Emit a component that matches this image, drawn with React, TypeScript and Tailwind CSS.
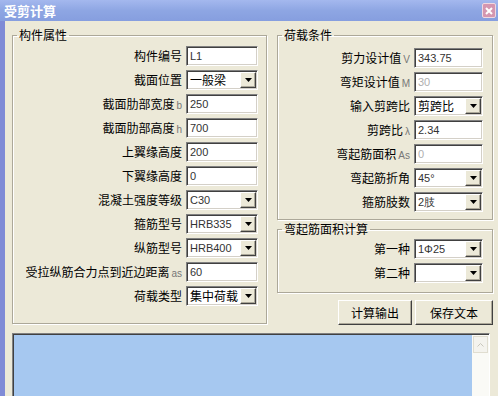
import React from "react";

const cjk = "font-['SimSun','Noto_Sans_CJK_SC',sans-serif]";
const latin = "font-['Tahoma','Liberation_Sans',sans-serif]";

function Label({ text, sub }: { text: string; sub?: string }) {
  return (
    <span className={`${cjk} text-[12px] leading-none text-black whitespace-nowrap`}>
      {text}
      {sub && <span className={`${latin} ml-[2px] text-[10px] text-[#777]`}>{sub}</span>}
    </span>
  );
}

function Arrow() {
  return (
    <div className="flex h-full w-[16px] shrink-0 items-center justify-center border border-t-white border-l-white border-b-[#404040] border-r-[#404040] bg-[#ece9d8] shadow-[inset_-1px_-1px_0_#aca899]">
      <svg width="7" height="4" viewBox="0 0 7 4">
        <path d="M0 0h7L3.5 4z" fill="#000" />
      </svg>
    </div>
  );
}

function Field({
  value,
  select,
  disabled,
  cjkValue,
  w = "w-[72px]",
}: {
  value: string;
  select?: boolean;
  disabled?: boolean;
  cjkValue?: boolean;
  w?: string;
}) {
  return (
    <div
      className={`${w} flex h-[20px] shrink-0 items-stretch border border-t-[#808080] border-l-[#808080] border-b-white border-r-white bg-white shadow-[inset_1px_1px_0_#404040,inset_-1px_-1px_0_#d4d0c8] p-[1px]`}
    >
      <div
        className={`flex min-w-0 flex-1 items-center overflow-hidden whitespace-nowrap pl-[2px] ${
          cjkValue ? `${cjk} text-[12px] text-black` : `${latin} text-[11px] ${disabled ? "text-[#b0b0b0]" : "text-[#333]"}`
        }`}
      >
        {value}
      </div>
      {select && <Arrow />}
    </div>
  );
}

function Row({ children }: { children: React.ReactNode }) {
  return <div className="flex h-[24px] items-center justify-end gap-[4px]">{children}</div>;
}

function Group({ title, className, children }: { title: string; className: string; children: React.ReactNode }) {
  return (
    <fieldset
      className={`border border-[#aca899] shadow-[inset_1px_1px_0_#fff,1px_1px_0_#fff] ${className}`}
    >
      <legend className={`${cjk} ml-[4px] px-[2px] text-[12px] leading-[16px] text-black`}>{title}</legend>
      {children}
    </fieldset>
  );
}

function Button({ text, w }: { text: string; w: string }) {
  return (
    <div
      className={`${w} ${cjk} flex h-[25px] items-center justify-center border border-t-white border-l-white border-b-[#404040] border-r-[#404040] bg-[#ece9d8] text-[12px] text-black shadow-[inset_-1px_-1px_0_#aca899]`}
    >
      {text}
    </div>
  );
}

export default function App() {
  return (
    <div className="flex h-[396px] w-[498px] flex-col overflow-hidden bg-[#ece9d8]">
      {/* 标题栏 */}
      <div className="flex h-[21px] shrink-0 items-center justify-between bg-gradient-to-b from-[#a4b8ee] via-[#8ea6e3] to-[#869edf] pl-[4px] pr-[2px]">
        <span className={`${cjk} text-[13px] font-bold text-white`}>受剪计算</span>
        <div className="flex h-[15px] w-[14px] items-center justify-center rounded-[2px] border border-[#f0d8e0] bg-[#d496b0]">
          <svg width="8" height="8" viewBox="0 0 8 8">
            <path d="M1 1l6 6M7 1L1 7" stroke="#fff" strokeWidth="2" />
          </svg>
        </div>
      </div>

      <div className="flex flex-1">
        <div className="w-[5px] shrink-0 bg-[#7f8bd6]" />
        <div className="flex flex-1 flex-col pl-[7px]">
          <div className="mt-[6px] flex gap-[10px]">
            {/* 左侧 */}
            <Group title="构件属性" className="h-[297px] w-[255px] pr-[8px] pt-[1px]">
              <Row><Label text="构件编号" /><Field value="L1" /></Row>
              <Row><Label text="截面位置" /><Field value="一般梁" select cjkValue /></Row>
              <Row><Label text="截面肋部宽度" sub="b" /><Field value="250" /></Row>
              <Row><Label text="截面肋部高度" sub="h" /><Field value="700" /></Row>
              <Row><Label text="上翼缘高度" /><Field value="200" /></Row>
              <Row><Label text="下翼缘高度" /><Field value="0" /></Row>
              <Row><Label text="混凝土强度等级" /><Field value="C30" select /></Row>
              <Row><Label text="箍筋型号" /><Field value="HRB335" select /></Row>
              <Row><Label text="纵筋型号" /><Field value="HRB400" select /></Row>
              <Row><Label text="受拉纵筋合力点到近边距离" sub="as" /><Field value="60" /></Row>
              <Row><Label text="荷载类型" /><Field value="集中荷载" select cjkValue /></Row>
            </Group>

            {/* 右侧 */}
            <div className="flex w-[216px] flex-col">
              <Group title="荷载条件" className="h-[193px] pr-[9px] pt-[3px]">
                <Row><Label text="剪力设计值" sub="V" /><Field value="343.75" w="w-[69px]" /></Row>
                <Row><Label text="弯矩设计值" sub="M" /><Field value="30" disabled w="w-[69px]" /></Row>
                <Row><Label text="输入剪跨比" /><Field value="剪跨比" select cjkValue w="w-[69px]" /></Row>
                <Row><Label text="剪跨比" sub="λ" /><Field value="2.34" w="w-[69px]" /></Row>
                <Row><Label text="弯起筋面积" sub="As" /><Field value="0" disabled w="w-[69px]" /></Row>
                <Row><Label text="弯起筋折角" /><Field value="45°" select w="w-[69px]" /></Row>
                <Row><Label text="箍筋肢数" /><Field value="2肢" select w="w-[69px]" /></Row>
              </Group>
              <Group title="弯起筋面积计算" className="mt-[1px] h-[72px] pr-[9px]">
                <Row><Label text="第一种" /><Field value="1Φ25" select w="w-[69px]" /></Row>
                <Row><Label text="第二种" /><Field value="" select w="w-[69px]" /></Row>
              </Group>
              <div className="mt-[7px] flex justify-end gap-[3px]">
                <Button text="计算输出" w="w-[74px]" />
                <Button text="保存文本" w="w-[78px]" />
              </div>
            </div>
          </div>

          {/* 输出区 */}
          <div className="mt-[8px] flex h-[70px] w-[478px] border border-t-[#808080] border-l-[#808080] border-b-white border-r-white bg-[#a6c8f0] shadow-[inset_1px_1px_0_#404040]">
            <div className="flex-1" />
            <div className="mt-[1px] w-[17px] bg-[#fafaf6]">
              <div className="mx-[1px] mt-[1px] flex h-[17px] items-center justify-center border border-[#e0ddd0] bg-[#f4f3ee]">
                <svg width="7" height="4" viewBox="0 0 7 4">
                  <path d="M0.5 3.5L3.5 0.5L6.5 3.5" stroke="#c8c6bc" fill="none" />
                </svg>
              </div>
            </div>
          </div>
        </div>
      </div>
    </div>
  );
}
